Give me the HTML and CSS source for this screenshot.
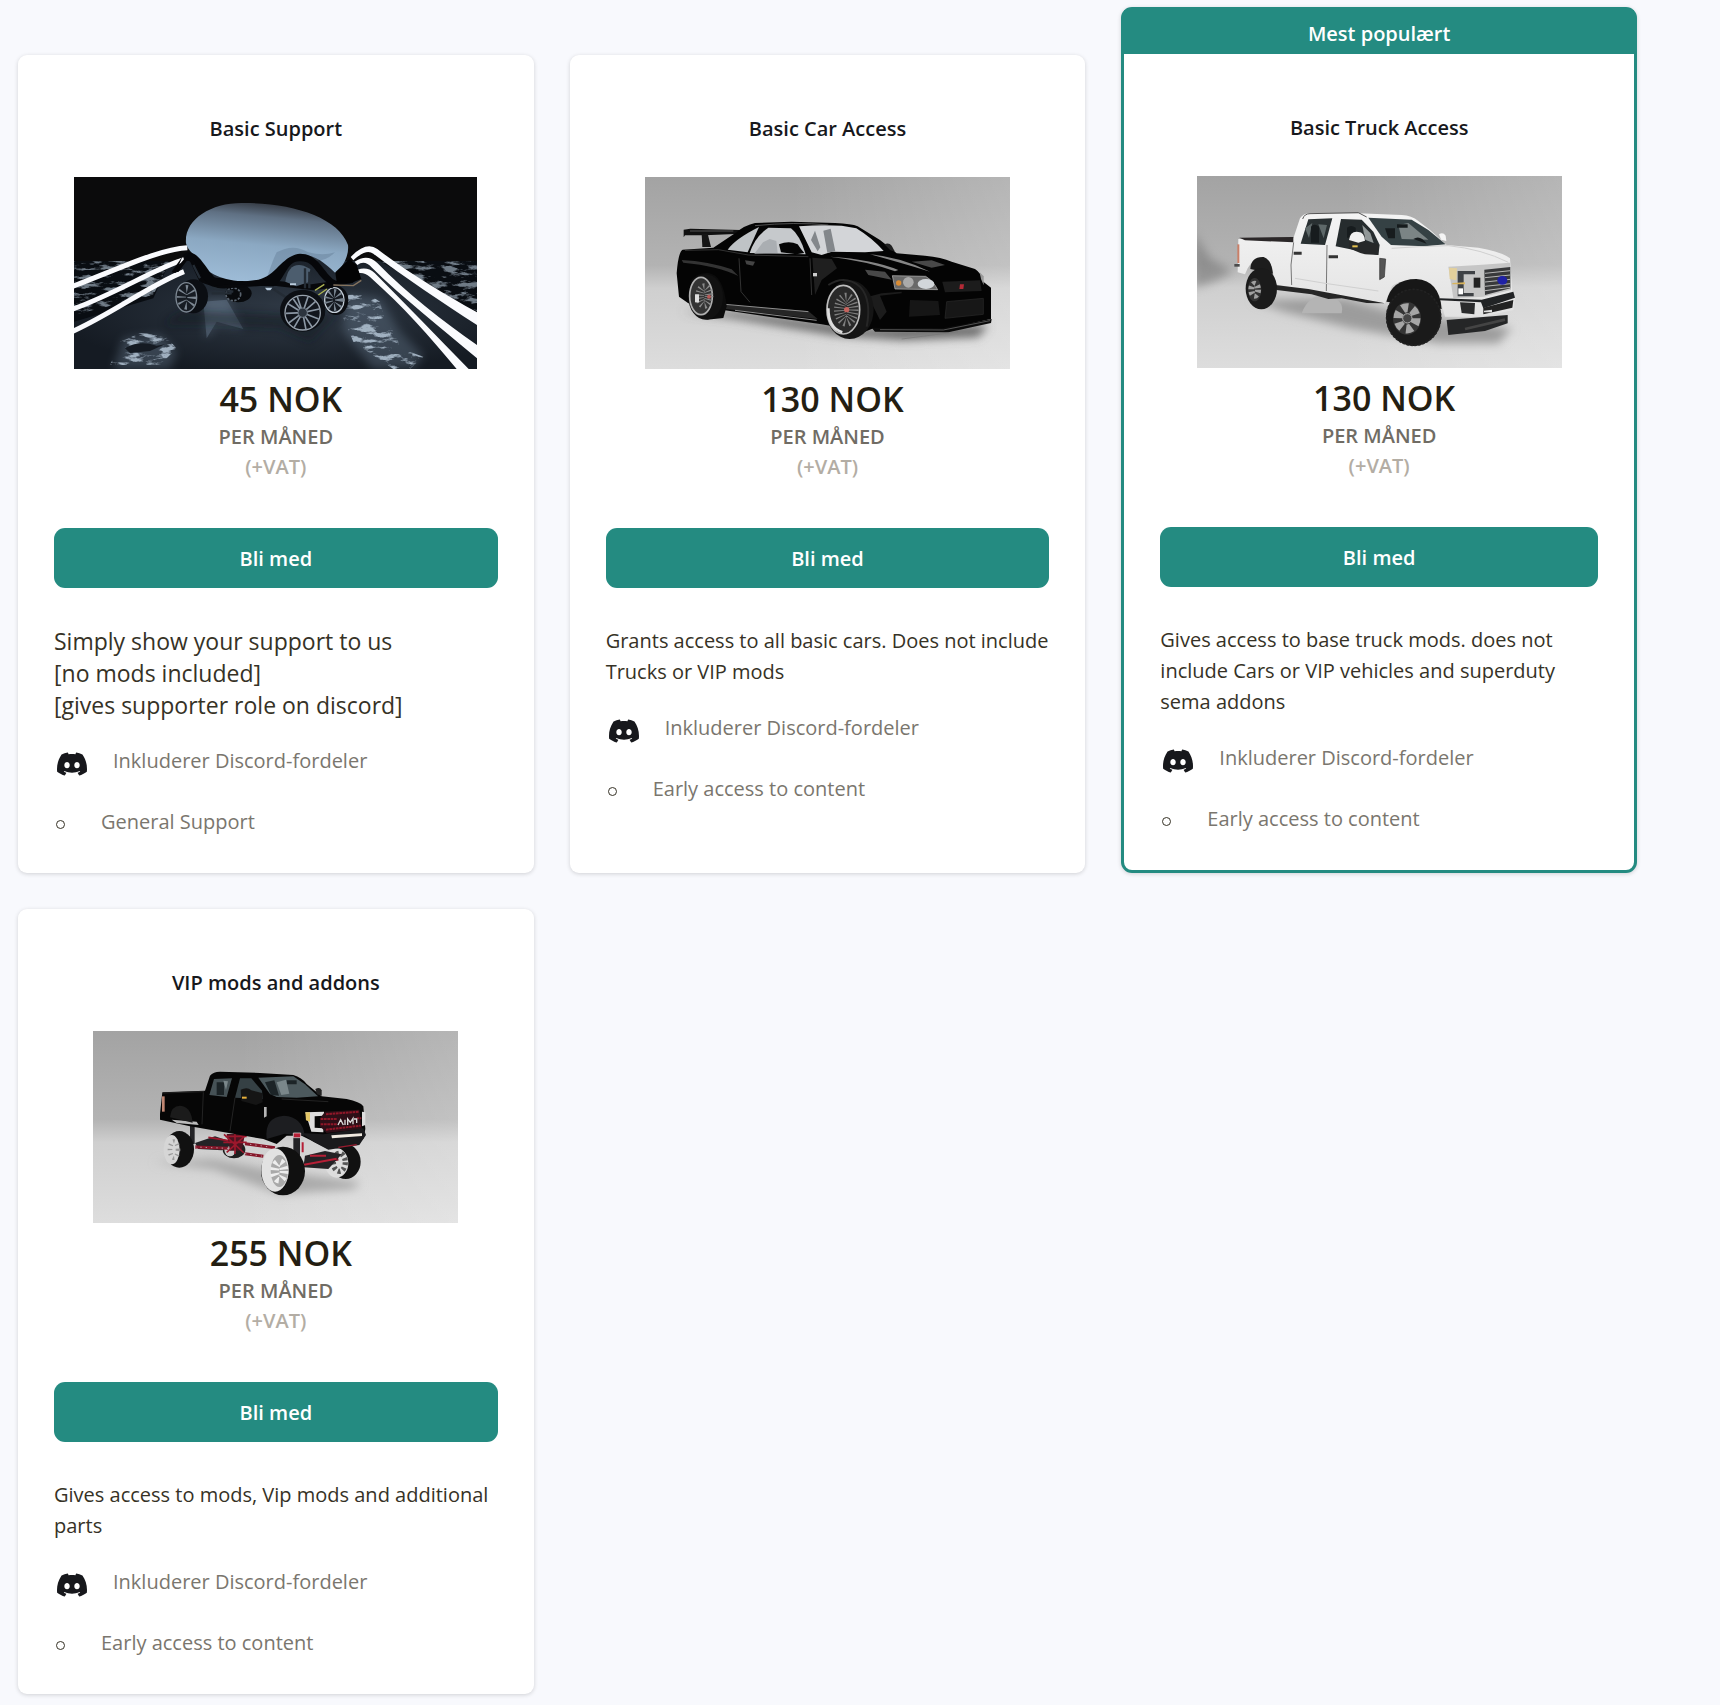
FILE: index.html
```html
<!DOCTYPE html>
<html lang="no">
  <head>
    <meta charset="UTF-8" />
    <meta name="viewport" content="width=device-width, initial-scale=1.0" />
    <title>Membership</title>
    <link rel="stylesheet" href="styles.css">
  </head>

  <body>
    <!-- Shared icons -->
    <svg class="sprite" aria-hidden="true">
      <symbol id="discord" viewBox="0 2.8 24 18.4">
        <path d="M20.317 4.3698a19.7913 19.7913 0 00-4.8851-1.5152.0741.0741 0 00-.0785.0371c-.211.3753-.4447.8648-.6083 1.2495-1.8447-.2762-3.68-.2762-5.4868 0-.1636-.3933-.4058-.8742-.6177-1.2495a.077.077 0 00-.0785-.037 19.7363 19.7363 0 00-4.8852 1.515.0699.0699 0 00-.0321.0277C.5334 9.0458-.319 13.5799.0992 18.0578a.0824.0824 0 00.0312.0561c2.0528 1.5076 4.0413 2.4228 5.9929 3.0294a.0777.0777 0 00.0842-.0276c.4616-.6304.8731-1.2952 1.226-1.9942a.076.076 0 00-.0416-.1057c-.6528-.2476-1.2743-.5495-1.8722-.8923a.077.077 0 01-.0076-.1277c.1258-.0943.2517-.1923.3718-.2914a.0743.0743 0 01.0776-.0105c3.9278 1.7933 8.18 1.7933 12.0614 0a.0739.0739 0 01.0785.0095c.1202.099.246.1981.3728.2924a.077.077 0 01-.0066.1276 12.2986 12.2986 0 01-1.873.8914.0766.0766 0 00-.0407.1067c.3604.698.7719 1.3628 1.225 1.9932a.076.076 0 00.0842.0286c1.961-.6067 3.9495-1.5219 6.0023-3.0294a.077.077 0 00.0313-.0552c.5004-5.177-.8382-9.6739-3.5485-13.6604a.061.061 0 00-.0312-.0286zM8.02 15.3312c-1.1825 0-2.1569-1.0857-2.1569-2.419 0-1.3332.9555-2.4189 2.157-2.4189 1.2108 0 2.1757 1.0952 2.1568 2.419 0 1.3332-.9555 2.4189-2.1569 2.4189zm7.9748 0c-1.1825 0-2.1569-1.0857-2.1569-2.419 0-1.3332.9554-2.4189 2.1569-2.4189 1.2108 0 2.1757 1.0952 2.1568 2.419 0 1.3332-.946 2.4189-2.1568 2.4189Z"/>
      </symbol>
      <linearGradient id="studio" x1="0" y1="0" x2="0" y2="1">
        <stop offset="0" stop-color="#a3a3a3"/>
        <stop offset=".46" stop-color="#b3b3b3"/>
        <stop offset=".58" stop-color="#cfcfcf"/>
        <stop offset="1" stop-color="#dddddd"/>
      </linearGradient>
      <linearGradient id="studioSide" x1="0" y1="0" x2="1" y2="0">
        <stop offset=".4" stop-color="#fff" stop-opacity="0"/>
        <stop offset="1" stop-color="#fff" stop-opacity=".2"/>
      </linearGradient>
      <filter id="soft" x="-30%" y="-60%" width="160%" height="220%"><feGaussianBlur stdDeviation="14"/></filter>
    </svg>

    <main class="tiers">
      <section class="tier">
        <h3 class="tier-title">Basic Support</h3>
        <svg class="tier-image wide" viewBox="42 36 1209 576" role="img" aria-label="Basic Support">
          <defs>
            <linearGradient id="egg" x1=".65" y1="0" x2=".45" y2="1">
              <stop offset="0" stop-color="#2c2f36"/>
              <stop offset=".2" stop-color="#5f7083"/>
              <stop offset=".55" stop-color="#8ba8c2"/>
              <stop offset="1" stop-color="#9dbbd6"/>
            </linearGradient>
            <radialGradient id="floor" cx=".55" cy=".45" r=".6">
              <stop offset="0" stop-color="#303a46"/>
              <stop offset="1" stop-color="#151b23"/>
            </radialGradient>
            <filter id="grit" x="0" y="0" width="100%" height="100%">
              <feTurbulence type="fractalNoise" baseFrequency=".02 .06" numOctaves="5" seed="8"/>
              <feColorMatrix values="0 0 0 0 .45  0 0 0 0 .55  0 0 0 0 .66  6 0 0 0 -3"/>
              <feComposite in2="SourceGraphic" operator="in"/>
            </filter>
          </defs>
          <rect x="42" y="36" width="1209" height="576" fill="#0b0b0c"/>
          <rect x="42" y="288" width="1209" height="324" fill="url(#floor)"/>
          <path d="M42 288H330L280 400 42 470zM960 288h291v170z" fill="#090d12"/>
          <path d="M42 288H330L280 390 42 450zM960 288h291v150z" filter="url(#grit)" opacity=".6"/>
          <path d="M160 612 190 520 300 508 350 560 330 612zM860 390 960 400 1020 500 1090 570 1060 612 940 612 850 500zM430 400 500 400 550 492 470 485 436 520z" fill="#71859a" opacity=".35" filter="url(#soft)"/>
          <path d="M430 410 500 404 550 492 470 470 440 520z" fill="#71859a" opacity=".4"/>
          <path d="M150 600 180 530 240 505 310 508 350 550 300 600zM865 390 920 385 960 410 975 470 1010 510 1020 550 1090 575 1050 612 1000 612 880 530 850 460z" filter="url(#grit)" opacity=".85"/>
          <path d="M195 550q40-25 95-8l25-4-45 20-60 6z" fill="#151b23"/>
          <path d="M310 480q50-60 120-40l230 10 180-10-90 90-90-40-220-10z" fill="#0d131b" opacity=".45" filter="url(#soft)"/>
          <!-- Light strips -->
          <g fill="none" stroke="#fafbfe" stroke-width="15">
            <path d="M36 365C180 310 300 252 382 248"/>
            <path d="M36 433C160 390 290 308 372 284"/>
            <path d="M36 500C150 450 270 360 372 320"/>
          </g>
          <g fill="#fafbfe">
            <path d="M872 276Q918 228 952 252C1040 320 1150 385 1251 442V480C1150 415 1030 335 940 266Q918 250 880 286z"/>
            <path d="M884 290Q922 264 952 294C1040 385 1150 470 1251 540V580C1140 485 1030 400 936 308Q914 284 892 300z"/>
            <path d="M893 314Q922 304 944 324C1040 420 1130 515 1226 612H1190C1110 515 1030 425 930 336Q914 322 898 324z"/>
          </g>
          <!-- Wheels at the back -->
          <ellipse cx="535" cy="385" rx="40" ry="27" fill="#080a0d"/>
          <ellipse cx="520" cy="388" rx="22" ry="19" fill="none" stroke="#59636e" stroke-width="5" stroke-dasharray="7 4"/>
          <ellipse cx="828" cy="406" rx="37" ry="44" fill="#0b0d11"/>
          <ellipse cx="823" cy="405" rx="29" ry="37" fill="#14181f" stroke="#c2ccd6" stroke-width="4"/>
          <ellipse cx="822" cy="405" rx="16" ry="20" fill="none" stroke="#77838f" stroke-width="26" stroke-dasharray="4 8"/>
          <!-- Frame and body -->
          <path d="M335 320 372 268q16-12 32 0l60 70 190 10 100 10 70-10-5 20-60 8-130-15-150 10-60-20-28-60-22-20-22 52z" fill="#07080b"/>
          <path d="M378 235C372 165 450 114 545 114 690 112 835 155 864 240 868 275 845 310 826 324 790 290 760 265 715 272 660 290 640 345 585 350 500 352 450 330 425 300 410 270 385 262 378 235z" fill="url(#egg)"/>
          <path d="M650 262q50-28 95 0 45 12 80 0-40 40-95 18-60 10-110 60 20-60 30-78z" fill="#5f7890" opacity=".4"/>
          <path d="M676 350q10-60 55-48l20 10-6 40-36 12z" fill="#4c5d6e"/>
          <path d="M388 264c22-4 42 30 72 72 60 20 100 12 135 8 55-12 70-72 125-78 60 0 75 70 110 82l70-14-22 20-60 10c-50-25-50-75-95-75-45-5-45 55-82 75l-130-6-55 6-24-20c-10-20-28-70-46-64l-30 40-20 5z" fill="#06070a"/>
          <path d="M826 322 868 282 890 300 904 342 870 355 830 352z" fill="#030304"/>
          <path d="M735 310v60M748 320v50M460 370l60 10M640 372l60 40M400 300l20 40M455 385h60" stroke="#242c35" stroke-width="7"/>
          <path d="M765 376l28-18M775 390l26-18" stroke="#aeb554" stroke-width="4"/>
          <path d="M820 360l60 2 24-16" stroke="#85735e" stroke-width="4" fill="none"/>
          <path d="M615 368h22l-6 8h-10zM690 355h18v6h-18z" fill="#b9cbdd"/>
          <!-- Wheels at the front -->
          <ellipse cx="400" cy="394" rx="44" ry="51" fill="#0b0e13"/>
          <ellipse cx="379" cy="397" rx="31" ry="44" fill="#171c23" stroke="#7c8792" stroke-width="4"/>
          <ellipse cx="380" cy="397" rx="16" ry="23" fill="none" stroke="#7c8792" stroke-width="28" stroke-dasharray="4 11"/>
          <ellipse cx="728" cy="437" rx="68" ry="63" fill="#0c0f14"/>
          <ellipse cx="728" cy="443" rx="53" ry="52" fill="#12161d" stroke="#98a2ad" stroke-width="4"/>
          <path d="M728 443 712 395M728 443 744 395M728 443 766 410M728 443 778 432M728 443 776 462M728 443 756 486M728 443 738 494M728 443 702 488M728 443 686 474M728 443 678 445M728 443 684 416M728 443 700 402" stroke="#8b97a4" stroke-width="5"/>
          <circle cx="728" cy="443" r="14" fill="#2c343e" stroke="#76828e" stroke-width="3"/>
        </svg>
        <div class="tier-price">45 NOK</div>
        <div class="tier-period">PER MÅNED</div>
        <div class="tier-vat">(+VAT)</div>
        <button type="button" class="join-button">Bli med</button>
        <p class="tier-text large">Simply show your support to us<br>[no mods included]<br>[gives supporter role on discord]</p>
        <ul class="perks">
          <li class="perk"><span class="perk-icon"><svg class="discord"><use href="#discord"/></svg></span>Inkluderer Discord-fordeler</li>
          <li class="perk"><span class="perk-dot"></span>General Support</li>
        </ul>
      </section>

      <section class="tier">
        <h3 class="tier-title">Basic Car Access</h3>
        <svg class="tier-image" viewBox="30 36 1095 576" role="img" aria-label="Basic Car Access">
          <rect x="30" y="36" width="1095" height="576" fill="url(#studio)"/>
          <rect x="30" y="36" width="1095" height="576" fill="url(#studioSide)"/>
          <path d="M140 440 300 440 700 490 1060 480 1030 515 800 525 600 510 300 460z" fill="#666" filter="url(#soft)"/>
          <!-- Spoiler -->
          <path d="M146 194l20-3 150 4-16 12-90 4h-60l-4 6z" fill="#111"/>
          <path d="M200 206h18l10 40h-26z" fill="#151515"/>
          <path d="M165 198h130" stroke="#777" stroke-width="2"/>
          <!-- Body -->
          <path d="M143 254 235 248 300 205Q330 180 360 174L470 170 600 174Q650 176 668 184L735 225 785 265 870 272Q920 276 950 290L1020 312Q1040 325 1045 350L1068 368 1068 462 930 492 715 490 690 500 560 478 270 436 160 415 132 395 125 325Q130 260 143 254z" fill="#040404"/>
          <path d="M278 254Q300 222 372 186L338 262z" fill="#bfc3c6"/>
          <path d="M344 264Q360 215 400 188L468 190Q495 210 512 268z" fill="#c6c9cc"/>
          <path d="M384 232l20-10 20 6 4 36-70 2z" fill="#aaaeb2"/>
          <path d="M492 184Q560 178 620 182L664 190Q710 218 746 258L690 262 590 260 560 270 530 262z" fill="#d3d5d8"/>
          <path d="M565 197l22-6 14 68-24 4zM528 225l12-28 16 50-8 12z" fill="#83878b"/>
          <path d="M432 238q30-12 56 0l10 14 10 12-24 4-46-6z" fill="#050505"/>
          <path d="M748 238q14-6 22 4l10 18-14-4z" fill="#202020"/>
          <g fill="none" stroke="#4a4a4a" stroke-width="2">
            <path d="M150 256 250 254 340 270 520 275"/>
            <path d="M360 182q120-12 220-2" stroke="#777"/>
            <path d="M312 280 318 380 345 412"/>
            <path d="M525 280l5 110"/>
          </g>
          <path d="M140 285q80 4 150 28l20 20q-60-30-165-40z" fill="#333"/>
          <path d="M585 275q130 8 205 40l-10 4q-80-30-195-44zM705 268q90 8 180 52-100-30-180-52z" fill="#858585"/>
          <path d="M532 278 590 282 606 310 560 345 540 390z" fill="#1f1f1f"/>
          <path d="M690 314l60 6 20 24-70-14zM830 290l60-4 40 14-40 8z" fill="#484848"/>
          <path d="M262 418 520 438 548 462 270 432z" fill="#262626"/>
          <path d="M270 418 520 440M300 436 545 466" stroke="#8d8d8d" stroke-width="3"/>
          <path d="M330 286l30 4-6 12-20-4z" fill="#444"/>
          <path d="M534 324h12v10h-12z" fill="#ccc"/>
          <!-- Lights and bumper -->
          <path d="M772 332 872 334Q895 348 908 374L780 372z" fill="#696969" stroke="#bbb" stroke-width="2"/>
          <circle cx="820" cy="352" r="16" fill="#aaa"/>
          <ellipse cx="873" cy="357" rx="25" ry="15" fill="#d2d6da"/>
          <circle cx="791" cy="354" r="8" fill="#d98c34"/>
          <path d="M922 350 1035 346 1040 378 930 382z" fill="#1c1c1c"/>
          <path d="M975 358h12l-2 14h-12z" fill="#b32a36"/>
          <path d="M935 410 1045 400 1045 448 930 460z" fill="#171717" stroke="#2b2b2b" stroke-width="2"/>
          <path d="M825 405 910 408 915 450 822 455z" fill="#161616"/>
          <path d="M700 395 740 385 800 380 800 385 735 392 755 440 735 465z" fill="#1c1c1c"/>
          <path d="M710 488 920 490 1070 462 1068 474 940 502 720 500z" fill="#0b0b0b"/>
          <path d="M735 494l190 1 140-28M800 522l170-22" fill="none" stroke="#777" stroke-width="2"/>
          <path d="M1034 322l12 12v26l-8-18z" fill="#999"/>
          <!-- Rear wheel -->
          <path d="M165 350q20-28 55-26 45 5 55 100l-10 35-50 5z" fill="#0c0c0c"/>
          <ellipse cx="212" cy="396" rx="52" ry="68" fill="#111"/>
          <ellipse cx="198" cy="393" rx="34" ry="56" fill="#343434" stroke="#b0b0b0" stroke-width="5"/>
          <ellipse cx="208" cy="393" rx="14" ry="25" fill="none" stroke="#8b8b8b" stroke-width="26" stroke-dasharray="3 6"/>
          <path d="M180 388h12v24h-12z" fill="#ddd"/>
          <circle cx="222" cy="395" r="6" fill="#b85b58"/>
          <!-- Front wheel -->
          <ellipse cx="644" cy="434" rx="72" ry="88" fill="#151515"/>
          <path d="M580 360q50-32 95 5 36 40 20 120" fill="none" stroke="#262626" stroke-width="6"/>
          <ellipse cx="625" cy="434" rx="49" ry="73" fill="#292929" stroke="#bdbdbd" stroke-width="5"/>
          <path d="M580 430q0 60 42 72" fill="none" stroke="#ddd" stroke-width="8"/>
          <ellipse cx="634" cy="434" rx="20" ry="34" fill="none" stroke="#808080" stroke-width="34" stroke-dasharray="3 6"/>
          <circle cx="635" cy="434" r="8" fill="#c4635d"/>
        </svg>
        <div class="tier-price">130 NOK</div>
        <div class="tier-period">PER MÅNED</div>
        <div class="tier-vat">(+VAT)</div>
        <button type="button" class="join-button">Bli med</button>
        <p class="tier-text">Grants access to all basic cars. Does not include Trucks or VIP mods</p>
        <ul class="perks">
          <li class="perk"><span class="perk-icon"><svg class="discord"><use href="#discord"/></svg></span>Inkluderer Discord-fordeler</li>
          <li class="perk"><span class="perk-dot"></span>Early access to content</li>
        </ul>
      </section>

      <section class="tier popular">
        <div class="popular-label">Mest populært</div>
        <h3 class="tier-title">Basic Truck Access</h3>
        <svg class="tier-image" viewBox="36 33 1095 576" role="img" aria-label="Basic Truck Access">
          <defs>
            <linearGradient id="white" x1="0" y1="0" x2="0" y2="1">
              <stop offset="0" stop-color="#f4f4f4"/>
              <stop offset="1" stop-color="#e2e2e2"/>
            </linearGradient>
          </defs>
          <rect x="36" y="33" width="1095" height="576" fill="url(#studio)"/>
          <rect x="36" y="33" width="1095" height="576" fill="url(#studioSide)"/>
          <path d="M26 200q30 50 50 80l70 40-60 30-60 20z" fill="#777" opacity=".6" filter="url(#soft)"/>
          <path d="M200 405 480 400 620 440 980 490 940 535 760 535 500 490 300 440z" fill="#9c9c9c" filter="url(#soft)"/>
          <path d="M350 445q20-55 70-55 60 10 50 55z" fill="#b4b4b4"/>
          <!-- Body -->
          <path d="M160 222 325 220 345 160Q355 147 370 145L520 145 650 150Q680 152 700 168L735 195 785 240 880 248Q950 260 975 280L982 380 990 400 985 435 890 455 780 455 765 400Q740 350 700 345 640 345 620 365L600 415 380 378 270 358 262 310Q250 278 225 278 195 285 180 328L158 322z" fill="url(#white)"/>
          <path d="M163 218 325 216 325 232 180 226z" fill="#2b2728"/>
          <path d="M353 162Q358 146 375 146L520 143 545 156" fill="none" stroke="#555" stroke-width="3"/>
          <path d="M370 163 442 160 420 240 347 236z" fill="#293032"/>
          <path d="M468 162 530 164 565 200 584 240 580 270 452 244z" fill="#262c2e"/>
          <path d="M550 158 680 164 730 195 782 238 720 244 618 240 590 215z" fill="#354144"/>
          <path d="M640 180l30-6 60 50-80-2z" fill="#7b8485"/>
          <path d="M532 180l24 24 10 30-26-10z" fill="#929898"/>
          <path d="M360 190l22-16-10 45zM400 178l26 2-10 40z" fill="#5e6869"/>
          <path d="M378 185q10-12 24 0v48h-24zM486 188q12-10 26 0v30h-26zM600 190h30v30h-20z" fill="#171c1e"/>
          <path d="M636 178h32v10h-32zM685 222q20-14 40 14" fill="#161b1d"/>
          <path d="M492 212q20-20 46-4l4 24 38 6v32l-40-2-14-4-34-14z" fill="#262829"/>
          <path d="M492 225q4-28 28-24 18 0 20 26l-20 6z" fill="#f0f0f0"/>
          <path d="M502 241h16v6h-16z" fill="#e5c150"/>
          <path d="M762 208q12-8 20 4l2 16-16-4z" fill="#f4f4f4"/>
          <path d="M326 232 318 300 320 360M426 240 424 378" fill="none" stroke="#777" stroke-width="3"/>
          <path d="M330 340 420 355 580 378M620 250q80-6 170-8 100 10 180 50" fill="none" stroke="#d0d0d0" stroke-width="3"/>
          <path d="M326 260h24v9h-24zM431 271h28v9h-28z" fill="#333"/>
          <path d="M584 280l18 2-4 54-14 8z" fill="#555" stroke="#333" stroke-width="2"/>
          <path d="M157 238h6v56h-6z" fill="#c97f68"/>
          <path d="M148 297h16v8h-16z" fill="#4c4c4c"/>
          <!-- Grille and lights -->
          <path d="M790 305 880 300 975 293 978 375 895 395 805 400z" fill="#c6c6c6"/>
          <path d="M792 308l24 2-2 36-20-4z" fill="#e3d09c"/>
          <path d="M818 318h52v10h-34v56h30v10h-48z" fill="#3f4246"/>
          <path d="M866 338h20v30h-20z" fill="#222"/>
          <path d="M898 314 976 306 976 370 900 390z" fill="#38393b"/>
          <path d="M900 325l76-8M900 338l76-8M900 351l76-8M900 364l76-8M900 377l76-10" stroke="#b5b5b5" stroke-width="3"/>
          <ellipse cx="952" cy="346" rx="15" ry="13" fill="#1f21a6"/>
          <path d="M802 354l38-2v6h-38z" fill="#d9b45c"/>
          <path d="M820 370h14v18h-14z" fill="#fff"/>
          <path d="M764 400 890 404 985 380 990 398 895 430 888 412 764 406z" fill="#212325"/>
          <path d="M825 412 870 414 868 448 830 444z" fill="#2a2b2c"/>
          <path d="M895 428 985 405 982 428 895 448z" fill="#222"/>
          <path d="M897 437l24-3v8h-24z" fill="#ddd"/>
          <path d="M785 465 968 450 968 475 900 498 790 510z" fill="#252627"/>
          <path d="M840 492l120-28" stroke="#444" stroke-width="8"/>
          <!-- Underside and wheels -->
          <path d="M270 360 370 372 600 415 545 414 470 400 430 402 380 388 275 375z" fill="#262626"/>
          <path d="M196 312q2-38 40-36 24 8 28 50z" fill="#1d1d1d"/>
          <ellipse cx="229" cy="371" rx="47" ry="62" fill="#1b1b1b"/>
          <ellipse cx="209" cy="374" rx="20" ry="35" fill="#333"/>
          <ellipse cx="209" cy="374" rx="10" ry="18" fill="none" stroke="#a0a0a0" stroke-width="18" stroke-dasharray="8 7"/>
          <path d="M604 410q16-68 90-68 70 5 76 90z" fill="#171717"/>
          <ellipse cx="686" cy="457" rx="83" ry="86" fill="#1a1a1a"/>
          <ellipse cx="686" cy="457" rx="81" ry="84" fill="none" stroke="#222" stroke-width="5" stroke-dasharray="7 5"/>
          <ellipse cx="666" cy="460" rx="42" ry="49" fill="#343434"/>
          <ellipse cx="666" cy="460" rx="27" ry="32" fill="none" stroke="#a5a5a5" stroke-width="27" stroke-dasharray="18 13"/>
          <circle cx="667" cy="460" r="14" fill="#454545" stroke="#b0b0b0" stroke-width="3"/>
        </svg>
        <div class="tier-price">130 NOK</div>
        <div class="tier-period">PER MÅNED</div>
        <div class="tier-vat">(+VAT)</div>
        <button type="button" class="join-button">Bli med</button>
        <p class="tier-text">Gives access to base truck mods. does not include Cars or VIP vehicles and superduty sema addons</p>
        <ul class="perks">
          <li class="perk"><span class="perk-icon"><svg class="discord"><use href="#discord"/></svg></span>Inkluderer Discord-fordeler</li>
          <li class="perk"><span class="perk-dot"></span>Early access to content</li>
        </ul>
      </section>

      <section class="tier">
        <h3 class="tier-title">VIP mods and addons</h3>
        <svg class="tier-image" viewBox="39 36 1095 576" role="img" aria-label="VIP mods and addons">
          <rect x="39" y="36" width="1095" height="576" fill="url(#studio)"/>
          <rect x="39" y="36" width="1095" height="576" fill="url(#studioSide)"/>
          <path d="M220 430 400 420 560 450 840 490 820 510 600 525 400 450z" fill="#aaa" filter="url(#soft)"/>
          <!-- Far wheels -->
          <ellipse cx="462" cy="392" rx="34" ry="26" fill="#1e1e1e"/>
          <ellipse cx="450" cy="392" rx="17" ry="20" fill="#ccc"/>
          <ellipse cx="797" cy="428" rx="45" ry="52" fill="#111"/>
          <ellipse cx="770" cy="432" rx="35" ry="44" fill="#ddd"/>
          <ellipse cx="778" cy="430" rx="18" ry="27" fill="none" stroke="#555" stroke-width="16" stroke-dasharray="8 8"/>
          <!-- Lift kit -->
          <path d="M330 315h14v60h-14zM640 345h20v65h-20zM345 372l60-20 60 20-40 22-70-4z" fill="#232326"/>
          <path d="M345 384l100 4M495 374l90 12M495 404l55 8M670 440l105-20" stroke="#861629" stroke-width="9"/>
          <path d="M345 384l100 4M495 404l55 8M510 376l60 8" stroke="#ddd" stroke-width="2" stroke-dasharray="4 12"/>
          <path d="M440 345h55l-10 50h-35z" fill="#4a1420"/>
          <path d="M385 355l60 10M432 346l60 56M500 346l-60 54M430 370h70M465 345v60M436 352h64" stroke="#9c172c" stroke-width="5"/>
          <path d="M675 410l60-14 50 10-40 44-75-5z" fill="#242225"/>
          <path d="M668 370v30M690 410h48M672 437l98-18" stroke="#b61f36" stroke-width="6"/>
          <!-- Body -->
          <path d="M247 220 375 215 390 170Q400 158 420 158L540 162 640 168Q665 175 680 195L725 232 800 240Q840 248 850 262L856 330 850 360 790 382 745 390 665 350 620 350 590 375 550 360 330 322 240 302 240 285z" fill="#060606"/>
          <path d="M402 180 456 178 440 234 388 228z" fill="#465256"/>
          <path d="M480 178 514 178 546 215 548 240 465 236z" fill="#354044"/>
          <path d="M535 176 640 172 675 196 714 232 650 236 590 234 570 225z" fill="#4c595d"/>
          <path d="M410 190h22v38h-22zM555 190l28-6 14 46-24-2zM620 184h30v12h-30z" fill="#1c2427"/>
          <path d="M590 190l28-8 10 42-24 4zM430 185l14 2-6 26z" fill="#7a878a"/>
          <path d="M482 212q20-10 32 2l32 8 2 28-20 8-44-12z" fill="#151515"/>
          <path d="M486 233h14v6h-14z" fill="#e8b13b"/>
          <path d="M706 210q14-8 19 4v16l-14-4z" fill="#222"/>
          <path d="M246 232h8v46h-8z" fill="#c08672"/>
          <path d="M275 302 350 308 356 318 290 312z" fill="#bbb"/>
          <path d="M270 295q4-38 36-34 28 6 32 50z" fill="#1b1b1b"/>
          <path d="M250 222l122-4M370 220l-4 96M465 236l-15 100M605 240l140 8" stroke="#232323" stroke-width="3"/>
          <path d="M552 264h8v28l-8 4z" fill="#b5b5b5"/>
          <path d="M560 360q-8-66 52-70 56 4 62 60l-60-6z" fill="#1d1e21"/>
          <!-- Front end -->
          <path d="M676 280 732 278 732 290 704 292 704 326 730 328 730 340 694 338z" fill="#ddd"/>
          <path d="M676 280h14v28l-12-4z" fill="#e3c668"/>
          <path d="M846 278l10 2v38l-10 4z" fill="#ddd"/>
          <path d="M735 278 838 272 846 330 740 342 720 322 720 298z" fill="#2e0f17"/>
          <path d="M738 286l98-8M722 300h50M722 316h50M738 332l104-12M830 298h14" stroke="#8f1728" stroke-width="6" stroke-dasharray="8 2"/>
          <path d="M774 318l8-16 8 16M795 318v-16M803 318v-18l8 10 8-12v18M822 300h10M830 300v12" fill="none" stroke="#ddd" stroke-width="4"/>
          <path d="M665 342 730 346 850 328 858 348 838 378 745 392 700 368z" fill="#1a1a1c"/>
          <path d="M754 349 846 343 846 351 756 358z" fill="#efe9df"/>
          <path d="M640 342h22v14h-22z" fill="#b61f36" stroke="#eee" stroke-width="2"/>
          <path d="M775 385l55-8" stroke="#981c2e" stroke-width="4"/>
          <!-- Near wheels -->
          <ellipse cx="298" cy="391" rx="44" ry="55" fill="#111"/>
          <ellipse cx="275" cy="392" rx="24" ry="44" fill="#d6d6d6"/>
          <ellipse cx="282" cy="392" rx="12" ry="24" fill="none" stroke="#999" stroke-width="14" stroke-dasharray="4 10"/>
          <ellipse cx="609" cy="456" rx="66" ry="73" fill="#101010"/>
          <ellipse cx="585" cy="453" rx="41" ry="65" fill="#e2e2e2"/>
          <ellipse cx="598" cy="456" rx="26" ry="48" fill="#a9a9a9"/>
          <ellipse cx="598" cy="456" rx="14" ry="25" fill="none" stroke="#eee" stroke-width="26" stroke-dasharray="7 9"/>
        </svg>
        <div class="tier-price">255 NOK</div>
        <div class="tier-period">PER MÅNED</div>
        <div class="tier-vat">(+VAT)</div>
        <button type="button" class="join-button">Bli med</button>
        <p class="tier-text">Gives access to mods, Vip mods and additional parts</p>
        <ul class="perks">
          <li class="perk"><span class="perk-icon"><svg class="discord"><use href="#discord"/></svg></span>Inkluderer Discord-fordeler</li>
          <li class="perk"><span class="perk-dot"></span>Early access to content</li>
        </ul>
      </section>
    </main>
  </body>
</html>
```
FILE: styles.css
```css
/* General page settings */
* {
  box-sizing: border-box;
}

body {
  margin: 0;
  background-color: #f8f9fd;
  font-family: "Segoe UI", "Open Sans", "Noto Sans", sans-serif;
  font-size: 20px;
  line-height: 30px;
}

.sprite {
  position: absolute;
  width: 0;
  height: 0;
}

/* Tier cards */
.tiers {
  display: grid;
  grid-template-columns: repeat(3, 1fr);
  gap: 36px;
  padding: 55px 83px 9px 18px;
}

.tier {
  display: flex;
  flex-direction: column;
  align-items: center;
  padding: 36px;
  border-radius: 9px;
  background-color: #fff;
  box-shadow: 0 1px 4px rgba(0, 0, 0, 0.16);
}

/* The label sticks out above the row */
.popular {
  margin-top: -48px;
  padding-top: 0;
  border: 3px solid #248b81;
  border-radius: 11px;
}

.popular-label {
  align-self: stretch;
  height: 44px;
  margin: 0 -36px 36px;
  padding-top: 9px;
  background-color: #248b81;
  color: #fff;
  font-weight: 600;
  text-align: center;
}

.tier-title {
  margin: 23px 0 33px;
  color: #17181c;
  font-size: 20px;
  font-weight: 600;
}

.tier-image {
  width: 365px;
  max-width: 100%;
  height: 192px;
}

.tier-image.wide {
  width: 403px;
}

.tier-price {
  margin-top: 7px;
  padding-left: 10px;
  color: #241e12;
  font-size: 34px;
  font-weight: 600;
  line-height: 46px;
}

.tier-period {
  color: #706c64;
  font-weight: 600;
}

.tier-vat {
  color: #b3ada4;
  font-weight: 600;
}

.join-button {
  width: 100%;
  height: 60px;
  margin-top: 46px;
  padding: 2px 0 0;
  border: none;
  border-radius: 11px;
  background-color: #248b81;
  color: #fff;
  font: inherit;
  font-weight: 600;
  cursor: pointer;
}

.tier-text {
  align-self: stretch;
  margin: 37px 0 26px;
  color: #363226;
  line-height: 31px;
}

.tier-text.large {
  margin-bottom: 25px;
  font-size: 23px;
  line-height: 32px;
}

/* Perk list */
.perks {
  display: flex;
  flex-direction: column;
  gap: 31px;
  align-self: stretch;
  margin: 0;
  padding: 0;
  list-style: none;
}

.perk {
  display: flex;
  color: #7a766e;
}

.perk-icon {
  width: 59px;
  padding: 6px 0 0 3px;
}

.discord {
  display: block;
  width: 30px;
  height: 24px;
  fill: #17181c;
}

.perk-dot {
  width: 9px;
  height: 9px;
  margin: 13px 36px 0 2px;
  border: 1px solid #363226;
  border-radius: 50%;
}
```
